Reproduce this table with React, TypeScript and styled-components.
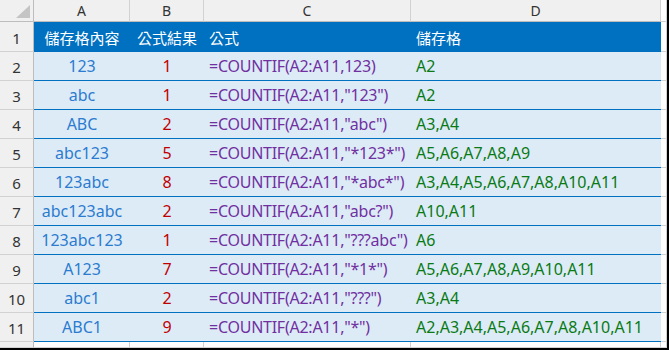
import React from 'react';
import styled, {createGlobalStyle} from 'styled-components';

const GlobalStyle = createGlobalStyle`
  html, body {
    margin: 0;
    padding: 0;
    background: #fff;
  }
  body {
    font-family: "Noto Sans", "Noto Sans CJK TC", sans-serif;
  }
`;

const Frame = styled.div`
  width: 667px;
  height: 348px;
  border-right: 2px solid #000;
  border-bottom: 2px solid #000;
  overflow: hidden;
`;

const Sheet = styled.div`
  display: grid;
  grid-template-columns: 34px 96px 74px 207px 250px 6px;
  grid-template-rows: 22px 30px repeat(10, 29px) 6px;
`;

const Corner = styled.div`
  background: #f0f0f0;
  border-right: 1px solid #bdbdbd;
  border-bottom: 1px solid #bdbdbd;
  display: flex;
  align-items: flex-end;
  justify-content: flex-end;
  padding: 0 3px 3px 0;
`;

const ColHead = styled.div`
  background: #f0f0f0;
  border-right: 1px solid #d2d2d2;
  border-bottom: 1px solid #bdbdbd;
  color: #333;
  font-size: 14px;
  display: flex;
  align-items: center;
  justify-content: center;
`;

const RowHead = styled.div`
  background: #f0f0f0;
  border-right: 1px solid #bdbdbd;
  border-bottom: 1px solid #d2d2d2;
  color: #333;
  font-size: 15px;
  display: flex;
  align-items: flex-end;
  justify-content: center;
  padding-bottom: 3px;
`;

const Title = styled.div<{$align?: string}>`
  background: #0070c0;
  color: #fff;
  font-size: 15px;
  display: flex;
  align-items: center;
  justify-content: ${p => p.$align || 'flex-start'};
  padding: 0 5px;
  white-space: nowrap;
`;

const Cell = styled.div<{$color: string; $align?: string; $tight?: boolean}>`
  background: #ddebf7;
  border-bottom: 1px solid #0070c0;
  color: ${p => p.$color};
  font-size: 16px;
  letter-spacing: ${p => (p.$tight ? '-0.25px' : 'normal')};
  display: flex;
  align-items: center;
  justify-content: ${p => p.$align || 'flex-start'};
  padding: 0 5px;
  white-space: nowrap;
  overflow: hidden;
`;

const Blank = styled.div`
  background: #fff;
  border-right: 1px solid #d2d2d2;
  border-bottom: 1px solid #d2d2d2;
`;

const rows = [
  ['123', '1', '=COUNTIF(A2:A11,123)', 'A2'],
  ['abc', '1', '=COUNTIF(A2:A11,"123")', 'A2'],
  ['ABC', '2', '=COUNTIF(A2:A11,"abc")', 'A3,A4'],
  ['abc123', '5', '=COUNTIF(A2:A11,"*123*")', 'A5,A6,A7,A8,A9'],
  ['123abc', '8', '=COUNTIF(A2:A11,"*abc*")', 'A3,A4,A5,A6,A7,A8,A10,A11'],
  ['abc123abc', '2', '=COUNTIF(A2:A11,"abc?")', 'A10,A11'],
  ['123abc123', '1', '=COUNTIF(A2:A11,"???abc")', 'A6'],
  ['A123', '7', '=COUNTIF(A2:A11,"*1*")', 'A5,A6,A7,A8,A9,A10,A11'],
  ['abc1', '2', '=COUNTIF(A2:A11,"???")', 'A3,A4'],
  ['ABC1', '9', '=COUNTIF(A2:A11,"*")', 'A2,A3,A4,A5,A6,A7,A8,A10,A11'],
];

export default function App() {
  return (
    <>
      <GlobalStyle />
      <Frame>
        <Sheet>
          <Corner>
            <svg width="14" height="13" viewBox="0 0 14 13">
              <polygon points="14,0 14,13 0,13" fill="#c4c4c4" />
            </svg>
          </Corner>
          {['A', 'B', 'C', 'D'].map(l => (
            <ColHead key={l}>{l}</ColHead>
          ))}
          <Blank />

          <RowHead>1</RowHead>
          <Title $align="center">儲存格內容</Title>
          <Title $align="center">公式結果</Title>
          <Title>公式</Title>
          <Title>儲存格</Title>
          <Blank />

          {rows.map((r, i) => (
            <React.Fragment key={i}>
              <RowHead>{i + 2}</RowHead>
              <Cell $color="#2b7bcf" $align="center">{r[0]}</Cell>
              <Cell $color="#c00000" $align="center">{r[1]}</Cell>
              <Cell $color="#7030a0" $tight>{r[2]}</Cell>
              <Cell $color="#0a7a14">{r[3]}</Cell>
              <Blank />
            </React.Fragment>
          ))}

          <RowHead />
          <Blank />
          <Blank />
          <Blank />
          <Blank />
          <Blank />
        </Sheet>
      </Frame>
    </>
  );
}
